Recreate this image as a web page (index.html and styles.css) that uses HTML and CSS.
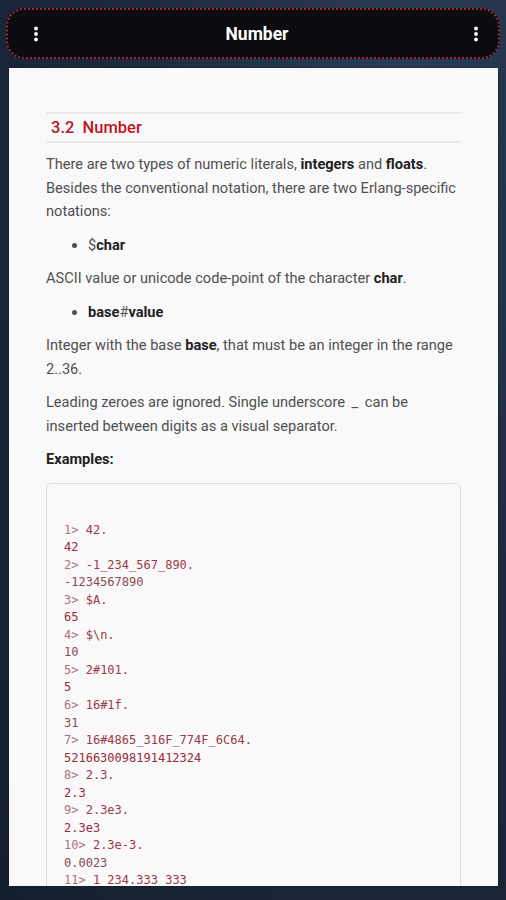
FILE: index.html
```html
<!DOCTYPE html>
<html>
<head>
<meta charset="utf-8">
<link rel="stylesheet" href="styles.css">
</head>
<body>
<div class="screen">
  <header class="topbar">
    <span class="kebab"><svg width="6" height="16" viewBox="0 0 6 16"><circle cx="3" cy="2.5" r="1.9" fill="#fff"/><circle cx="3" cy="8" r="1.9" fill="#fff"/><circle cx="3" cy="13.5" r="1.9" fill="#fff"/></svg></span>
    <h1 class="title">Number</h1>
    <span class="kebab"><svg width="6" height="16" viewBox="0 0 6 16"><circle cx="3" cy="2.5" r="1.9" fill="#fff"/><circle cx="3" cy="8" r="1.9" fill="#fff"/><circle cx="3" cy="13.5" r="1.9" fill="#fff"/></svg></span>
  </header>
  <main class="card">
    <h2 class="section">3.2&nbsp;&nbsp;Number</h2>
    <p class="para">There are two types of numeric literals, <b>integers</b> and <b>floats</b>. Besides the conventional notation, there are two Erlang-specific notations:</p>
    <ul class="list"><li>$<b>char</b></li></ul>
    <p class="para">ASCII value or unicode code-point of the character <b>char</b>.</p>
    <ul class="list"><li><b>base</b>#<b>value</b></li></ul>
    <p class="para">Integer with the base <b>base</b>, that must be an integer in the range 2..36.</p>
    <p class="para">Leading zeroes are ignored. Single underscore <code class="ic">_</code> can be inserted between digits as a visual separator.</p>
    <p class="para"><b>Examples:</b></p>
    <pre class="code"><span class="pr">1&gt;</span> <span class="in">42.</span>
<span class="out">42</span>
<span class="pr">2&gt;</span> <span class="in">-1_234_567_890.</span>
<span class="out2">-1234567890</span>
<span class="pr">3&gt;</span> <span class="in">$A.</span>
<span class="out">65</span>
<span class="pr">4&gt;</span> <span class="in">$\n.</span>
<span class="out2">10</span>
<span class="pr">5&gt;</span> <span class="in">2#101.</span>
<span class="out">5</span>
<span class="pr">6&gt;</span> <span class="in">16#1f.</span>
<span class="out2">31</span>
<span class="pr">7&gt;</span> <span class="in">16#4865_316F_774F_6C64.</span>
<span class="out">5216630098191412324</span>
<span class="pr">8&gt;</span> <span class="in">2.3.</span>
<span class="out">2.3</span>
<span class="pr">9&gt;</span> <span class="in">2.3e3.</span>
<span class="out">2.3e3</span>
<span class="pr">10&gt;</span> <span class="in">2.3e-3.</span>
<span class="out2">0.0023</span>
<span class="pr">11&gt;</span> <span class="in">1_234.333_333</span>
<span class="out">1234.333333</span></pre>
  </main>
</div>
</body>
</html>
```
FILE: styles.css
```css
html, body {
  margin: 0;
  padding: 0;
}
body {
  width: 506px;
  height: 900px;
  overflow: hidden;
  background: radial-gradient(ellipse at 80% 10%, #2a3d55 0%, #1d2b3f 45%, #151f2e 100%);
  font-family: Roboto, "Noto Sans", sans-serif;
}
.screen {
  display: flex;
  flex-direction: column;
  gap: 9px;
  padding: 8px 6px 0 6px;
  height: 900px;
  box-sizing: border-box;
}
.topbar {
  height: 51px;
  box-sizing: border-box;
  background: #0c0c10;
  border: 2px dotted #9e2440;
  border-radius: 18px;
  display: flex;
  align-items: center;
  justify-content: space-between;
  padding: 0 19px 0 25px;
}
.kebab {
  display: flex;
  width: 6px;
  height: 16px;
}
.title {
  margin: 0 0 0 2px;
  color: #fff;
  font-size: 17.5px;
  font-weight: 700;
  font-family: Roboto, sans-serif;
}
.card {
  margin: 0 2px 0 3px;
  height: 818px;
  overflow: hidden;
  background: #f9f9f9;
  padding: 44px 37px 0 37px;
  box-sizing: border-box;
  box-shadow: 0 0 2px rgba(0,0,0,0.4);
}
.section {
  margin: 0;
  border-top: 2px solid #e9e9e9;
  border-bottom: 2px solid #e9e9e9;
  color: #c0141f;
  font-size: 16.5px;
  font-weight: 500;
  line-height: 25px;
  padding: 1px 5px 1px 5px;
}
.para {
  margin: 10px 0 0 0;
  font-size: 14.6px;
  line-height: 23.5px;
  color: #505050;
}
.para b, .list b {
  color: #222;
  font-weight: 700;
}
.ic {
  font-family: Roboto, sans-serif;
  font-size: 14.6px;
  padding: 0 3px;
  color: #505050;
}
.list {
  margin: 10px 0 0 0;
  padding-left: 42px;
  font-size: 14.6px;
  line-height: 23.5px;
  color: #505050;
}
.code {
  margin: 11px 0 0 0;
  border: 1px solid #dcdcdc;
  border-radius: 6px;
  padding: 38px 17px 20px 17px;
  font-family: "DejaVu Sans Mono", "Liberation Mono", monospace;
  font-size: 12px;
  line-height: 17.55px;
  color: #9a2f3f;
  background: #f9f9f9;
}
.pr { color: #b0727c; }
.in { color: #9c3a46; }
.out { color: #9a2a3a; }
.out2 { color: #8a4a52; }
```
